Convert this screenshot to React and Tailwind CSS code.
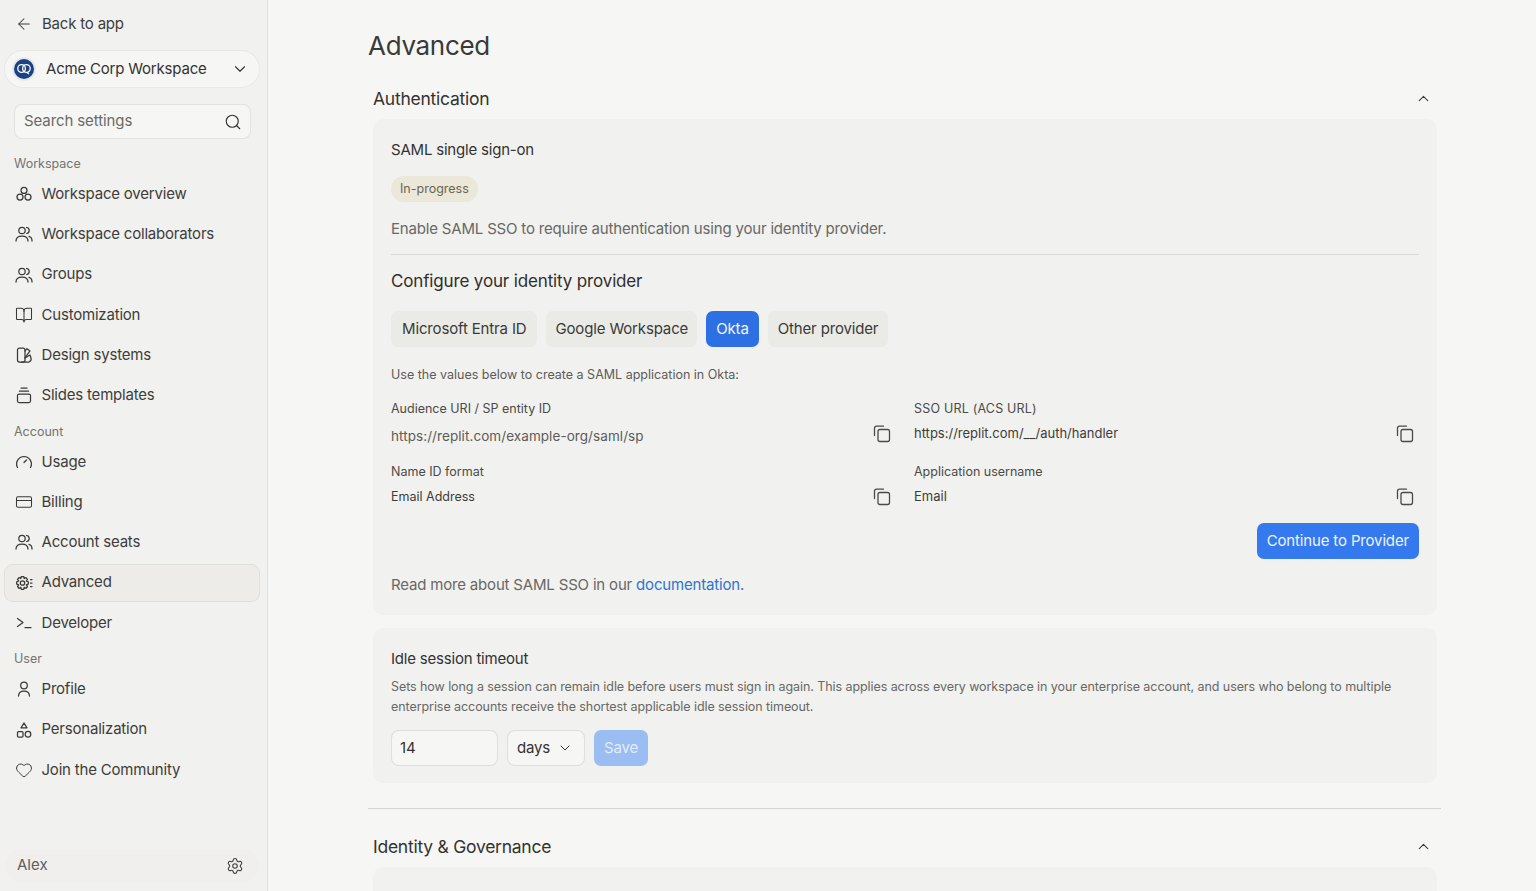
import React from "react";
import { ArrowLeft, ChevronDown, ChevronUp, Search, BookOpen, CreditCard, Heart, Settings } from "lucide-react";

const Ic = ({ children }) => (
    <svg width="18" height="18" viewBox="0 0 18 18" fill="none" stroke="#3a3a38" strokeWidth="1.250" strokeLinecap="round" strokeLinejoin="round" className="shrink-0">
        {children}
    </svg>
);

const Circles = () => (
    <Ic>
        <circle cx="9" cy="5.400" r="3" />
        <circle cx="5" cy="12" r="3" />
        <circle cx="13" cy="12" r="3" />
    </Ic>
);
const People = () => (
    <Ic>
        <circle cx="7" cy="5.500" r="3.200" />
        <path d="M1 16c0-3.400 2.600-5 6-5s6 1.600 6 5" />
        <path d="M11.500 2.500c1.700.2 2.700 1.400 2.700 3s-1 2.700-2.500 3" />
        <path d="M14 11.300c1.900.5 3 2 3 4.700" />
    </Ic>
);
const Book = () => <BookOpen size={18} strokeWidth={1.400} color="#3a3a38" className="shrink-0" />;
const Design = () => (
    <Ic>
        <rect x="2.500" y="2" width="7.500" height="14" rx="2" />
        <path d="M10 5l2-2.300 3 2.200-5 7" />
        <path d="M10 12l5-3 1 3c.4 1.800-.4 3.500-2 4H6.500" />
    </Ic>
);
const Slides = () => (
    <Ic>
        <rect x="2.500" y="8" width="13" height="8.500" rx="1.500" />
        <path d="M4.500 5.200h9" />
        <path d="M6 2h6" />
    </Ic>
);
const Usage = () => (
    <Ic>
        <path d="M2.500 14.500A7.500 7.500 0 0 1 9 3.500a7.500 7.500 0 0 1 6.500 11" />
        <path d="M9 9.500l2.500-2.500" />
    </Ic>
);
const Card = () => <CreditCard size={18} strokeWidth={1.400} color="#3a3a38" className="shrink-0" />;
const Advanced = () => (
    <Ic>
        <circle cx="7.500" cy="9" r="2.200" />
        <path d="M6.300 2.500h2.400l.5 2 1.800-.9 1.500 1.800-1.200 1.600 2 .8v2.300l-2 .8 1.200 1.600-1.500 1.800-1.800-.9-.5 2H6.300l-.5-2-1.800.9-1.500-1.800 1.200-1.600-2-.8V7.800l2-.8-1.200-1.600 1.500-1.800 1.800.9z" />
        <path d="M15.500 5.500h1.500M15.500 9h1.500M15.500 12.500h1.500" />
    </Ic>
);
const Dev = () => (
    <Ic>
        <path d="M2.500 4.500l5.500 4-5.500 4" />
        <path d="M10 13.500h6" />
    </Ic>
);
const Profile = () => (
    <Ic>
        <circle cx="9" cy="5.500" r="3.300" />
        <path d="M3.500 16c0-3.500 2.200-5 5.500-5s5.500 1.500 5.500 5" />
    </Ic>
);
const Shapes = () => (
    <Ic>
        <path d="M9 2l3 4.800H6z" />
        <rect x="2.500" y="10.500" width="5.500" height="5.500" rx="1" />
        <circle cx="13" cy="13.200" r="2.800" />
    </Ic>
);
const HeartIc = () => <Heart size={18} strokeWidth={1.300} color="#3a3a38" className="shrink-0" />;

const CopyIc = () => (
    <svg width="18" height="18" viewBox="0 0 18 18" fill="none" stroke="#4a4a48" strokeWidth="1.300" strokeLinecap="round" strokeLinejoin="round" className="shrink-0">
        <rect x="5" y="4.500" width="11.500" height="12" rx="2" />
        <path d="M1.500 10.500V3.200C1.500 2 2.300 1.200 3.500 1.200h7" />
    </svg>
);

const Logo = () => (
    <div className="w-[20px] h-[20px] rounded-full bg-[#1d4283] flex items-center justify-center shrink-0 shadow-[0_0_0_2px_#e6eaf0]">
        <svg width="16" height="16" viewBox="0 0 16 16" fill="none" stroke="#ffffff" strokeWidth="1.300">
            <circle cx="5.600" cy="7.500" r="3.800" />
            <circle cx="10.400" cy="7.500" r="3.800" />
            <path d="M11 11.500l2 1.500" />
        </svg>
    </div>
);

const Item = ({ icon: Icon, label, active }) => (
    <div className={`flex items-center gap-[8.500px] h-[36px] px-[10px] mb-[4.300px] rounded-[8px] text-[15px] tracking-[-0.2px] text-[#3d3d3b] ${active ? "bg-[#eeece8] shadow-[0_0_0_1px_#e0ded9]" : ""}`}>
        <Icon />
        <span>{label}</span>
    </div>
);

const GroupLabel = ({ children, top }) => (
    <div className={`${top} mb-[3px] px-[9px] text-[12.500px] leading-[18px] text-[#74746f]`}>{children}</div>
);

const Field = ({ label, value, labelClass = "", valueClass = "" }) => (
    <div>
        <div className={`text-[12.500px] leading-[18px] text-[#4b4b48] ${labelClass}`}>{label}</div>
        <div className="flex items-center justify-between mt-[3px] h-[26px]">
            <span className={`text-[#3d3d3b] ${valueClass}`}>{value}</span>
            <button className="mr-[5px]"><CopyIc /></button>
        </div>
    </div>
);

const ProviderTab = ({ label, active, pad = "px-[10px]" }) => (
    <button className={`h-[36px] ${pad} rounded-[7px] text-[15px] tracking-[-0.15px] ${active ? "bg-[#2d70e4] text-[#f3f6fc]" : "bg-[#eaeae6] text-[#3a3a38]"}`}>
        {label}
    </button>
);

const SectionHead = ({ title }) => (
    <div className="flex items-center justify-between pl-[5px] pr-[9px] h-[24px]">
        <span className="pt-[2px] text-[17.500px] tracking-[-0.25px] text-[#333331]">{title}</span>
        <ChevronUp size={17} strokeWidth={1.500} color="#3d3d3b" />
    </div>
);

export default function App() {
    return (
        <div className="flex h-screen overflow-hidden bg-[#f6f6f4] font-['Inter','Liberation_Sans',sans-serif]">
            <aside className="w-[268px] shrink-0 h-full flex flex-col bg-[#f1f1ef] border-r border-[#dfdfdc] pl-[5px] pr-[8px] pt-[1px]">
                <div className="flex items-center gap-[9px] h-[46px] pl-[10px] text-[15px] tracking-[-0.2px] text-[#3d3d3b]">
                    <ArrowLeft size={18} strokeWidth={1.400} />
                    <span>Back to app</span>
                </div>
                <div className="flex items-center h-[36px] mt-[4px] pl-[9px] pr-[10px] rounded-full bg-[#f6f6f4] shadow-[0_0_0_1px_#e8e8e5] text-[15px] tracking-[-0.2px] text-[#333331]">
                    <Logo />
                    <span className="ml-[12px] flex-1">Acme Corp Workspace</span>
                    <ChevronDown size={18} strokeWidth={1.500} />
                </div>
                <div className="flex items-center justify-between h-[33px] mt-[18px] ml-[10px] mr-[9px] pl-[9px] pr-[8px] rounded-[7px] bg-[#f6f6f4] shadow-[0_0_0_1px_#e2e2df] text-[15px] tracking-[-0.1px] text-[#6a6a67]">
                    <span>Search settings</span>
                    <Search size={18} strokeWidth={1.500} color="#333" />
                </div>
                <GroupLabel top="mt-[17px]">Workspace</GroupLabel>
                <Item icon={Circles} label="Workspace overview" />
                <Item icon={People} label="Workspace collaborators" />
                <Item icon={People} label="Groups" />
                <Item icon={Book} label="Customization" />
                <Item icon={Design} label="Design systems" />
                <Item icon={Slides} label="Slides templates" />
                <GroupLabel top="mt-[5px]">Account</GroupLabel>
                <Item icon={Usage} label="Usage" />
                <Item icon={Card} label="Billing" />
                <Item icon={People} label="Account seats" />
                <Item icon={Advanced} label="Advanced" active />
                <Item icon={Dev} label="Developer" />
                <GroupLabel top="mt-[5px]">User</GroupLabel>
                <Item icon={Profile} label="Profile" />
                <Item icon={Shapes} label="Personalization" />
                <Item icon={HeartIc} label="Join the Community" />
                <div className="mt-auto mb-[9px] flex items-center justify-between h-[33px] pl-[12px] pr-[15px] rounded-full bg-[#f0efed] text-[15px] text-[#5e5e5b]">
                    <span>Alex</span>
                    <Settings size={18} strokeWidth={1.400} color="#3a3a38" />
                </div>
            </aside>

            <main className="flex-1 pl-[100px] pr-[95px] pt-[28px]">
                <h1 className="text-[26px] tracking-[-0.3px] leading-[36px] text-[#3a3a38]">Advanced</h1>
                <div className="mt-[22px]"><SectionHead title="Authentication" /></div>

                <div className="mt-[9px] ml-[5px] mr-[4px] rounded-[10px] bg-[#f1f1ef] px-[18px] pt-[20px] h-[496px]">
                    <div className="text-[15px] tracking-[-0.2px] leading-[22px] text-[#333331]">SAML single sign-on</div>
                    <div className="mt-[15px] inline-flex items-center h-[26px] px-[9px] rounded-full bg-[#ebe7d9] text-[12.500px] text-[#6b6650]">In-progress</div>
                    <div className="mt-[16px] text-[15px] tracking-[-0.18px] leading-[22px] text-[#686865]">Enable SAML SSO to require authentication using your identity provider.</div>
                    <div className="mt-[14px] border-t border-[#d8d8d4]" />
                    <div className="mt-[14px] text-[17px] tracking-[-0.15px] leading-[24px] text-[#2f2f2d]">Configure your identity provider</div>
                    <div className="mt-[18px] flex gap-[9px]">
                        <ProviderTab label="Microsoft Entra ID" pad="px-[11px]" />
                        <ProviderTab label="Google Workspace" pad="px-[9px]" />
                        <ProviderTab label="Okta" active />
                        <ProviderTab label="Other provider" />
                    </div>
                    <div className="mt-[19px] text-[12.500px] leading-[18px] text-[#5c5c59]">Use the values below to create a SAML application in Okta:</div>
                    <div className="mt-[16px] grid grid-cols-2 gap-x-[18px] gap-y-[16px]">
                        <Field label="Audience URI / SP entity ID" value="https://replit.com/example-org/saml/sp" valueClass="text-[13.500px] tracking-[0.07px] text-[#5c5c59] translate-y-[2px]" />
                        <Field label="SSO URL (ACS URL)" labelClass="tracking-[0.2px]" value="https://replit.com/__/auth/handler" valueClass="text-[13px]" />
                        <Field label="Name ID format" value="Email Address" valueClass="text-[12.500px]" />
                        <Field label="Application username" value="Email" valueClass="text-[13px]" />
                    </div>
                    <div className="flex justify-end mt-[13px]">
                        <button className="h-[36px] px-[10px] rounded-[7px] bg-[#3579ee] text-[15px] tracking-[-0.15px] text-[#eef3fd]">Continue to Provider</button>
                    </div>
                    <div className="mt-[15px] text-[15px] tracking-[-0.18px] leading-[22px] text-[#686865]">
                        Read more about SAML SSO in our <span className="text-[#2f74d0]">documentation</span>.
                    </div>
                </div>

                <div className="mt-[13px] ml-[5px] mr-[4px] rounded-[10px] bg-[#f1f1ef] px-[18px] pt-[20px] h-[155px]">
                    <div className="text-[15px] tracking-[-0.2px] leading-[22px] text-[#333331]">Idle session timeout</div>
                    <p className="mt-[7px] text-[12.500px] tracking-[-0.07px] leading-[20px] text-[#686865]">
                        Sets how long a session can remain idle before users must sign in again. This applies across every workspace in your enterprise account, and users who belong to multiple enterprise accounts receive the shortest applicable idle session timeout.
                    </p>
                    <div className="mt-[13px] flex items-center gap-[11px]">
                        <div className="ml-[1px] w-[105px] h-[34px] flex items-center px-[8px] rounded-[7px] bg-[#f6f6f4] shadow-[0_0_0_1px_#dfdfdb] text-[15px] tracking-[-0.2px] text-[#333331]">14</div>
                        <div className="w-[76px] h-[34px] flex items-center justify-between pl-[9px] pr-[11px] rounded-[7px] bg-[#f6f6f4] shadow-[0_0_0_1px_#dfdfdb] text-[15px] tracking-[-0.2px] text-[#333331]">
                            days
                            <ChevronDown size={16} strokeWidth={1.500} />
                        </div>
                        <button className="ml-[-1px] w-[54px] h-[36px] rounded-[7px] bg-[#9abdf2] text-[15px] tracking-[-0.15px] text-[#e3ecfb]">Save</button>
                    </div>
                </div>

                <div className="mt-[25px] border-t border-[#d5d5d0]" />
                <div className="mt-[25px]"><SectionHead title="Identity & Governance" /></div>
                <div className="mt-[9px] ml-[5px] mr-[4px] rounded-[10px] bg-[#f1f1ef] h-[80px]" />
            </main>
        </div>
    );
}
